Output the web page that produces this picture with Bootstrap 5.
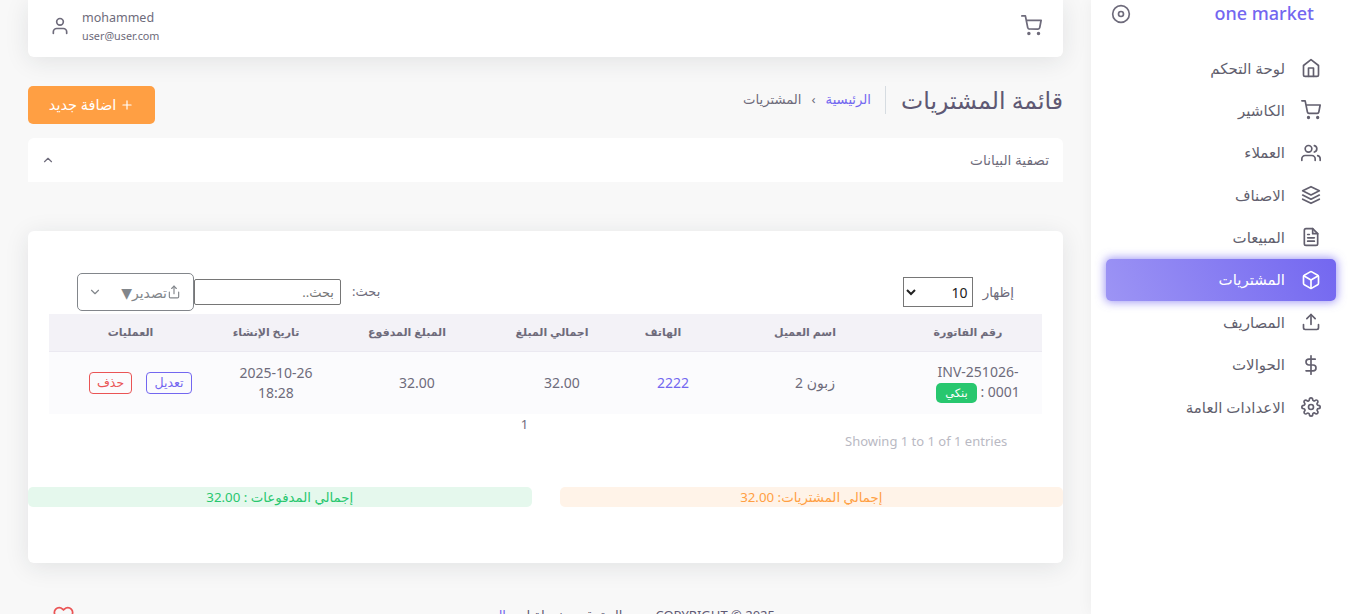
<!DOCTYPE html>
<html lang="ar" dir="rtl">
<head>
  <meta charset="UTF-8" />
  <meta name="viewport" content="width=device-width, initial-scale=1" />
  <title>قائمة المشتريات</title>
  <link href="https://cdn.jsdelivr.net/npm/bootstrap@5.3.0/dist/css/bootstrap.min.css" rel="stylesheet" />
  <style>
    html, body { height: 614px; overflow: hidden; }
    body {
      background: #f8f8f8;
      color: #6e6b7b;
      font-family: "Noto Sans", "DejaVu Sans", sans-serif;
      font-size: 13px;
    }
    .ico { fill: none; stroke: currentColor; stroke-width: 2; stroke-linecap: round; stroke-linejoin: round; flex-shrink: 0; }
    .page-wrap { width: 1348px; height: 614px; }

    /* sidebar */
    .side { width: 257px; height: 614px; background: #fff; box-shadow: 0 0 15px rgba(34,41,47,.05); flex-shrink: 0; }
    .side-brand { height: 27px; padding: 0 34px 0 20px; }
    .brand-name { color: #7367f0; font-size: 18px; font-weight: 500; line-height: 27px; }
    .side-menu { margin-top: 19.6px; padding: 0 12px 0 15px; }
    .side-link { height: 42.4px; padding: 0 15px; gap: 16px; color: #625f6e; font-size: 15px; text-decoration: none; border-radius: 5px; }
    .side-link.on {
      color: #fff;
      background: linear-gradient(-118deg, #7367f0, rgba(115,103,240,.7));
      box-shadow: 0 0 10px 1px rgba(115,103,240,.7);
    }

    /* content */
    .content { width: 1091px; padding: 0 28px; }
    .top-bar { height: 57px; padding: 0 21px 6px 22px; background: #fff; border-radius: 0 0 6px 6px; box-shadow: 0 4px 24px rgba(34,41,47,.1); }
    .u-name { font-size: 12.5px; line-height: 20px; }
    .u-mail { font-size: 10.8px; line-height: 16px; }
    .title-row { margin-top: 29px; height: 38px; }
    .page-title { font-size: 23.6px; font-weight: 400; color: #5e5873; margin: 0; padding-left: 15px; border-left: 1px solid #d6dce1; line-height: 28px; }
    .crumbs { font-size: 13.2px; padding-right: 14px; gap: 10px; }
    .crumbs a { color: #7367f0; text-decoration: none; }
    .btn-add { width: 127px; height: 38px; background: #ff9f43; color: #fff; border: 0; border-radius: 5px; font-size: 14.5px; }
    .btn-add:hover { background: #ff9f43; color: #fff; }
    .filter-box { margin-top: 14px; height: 44px; padding: 0 14px 0 13px; background: #fff; border-radius: 6px 6px 0 0; font-size: 13.7px; }

    .main-card { margin-top: 49px; height: 332px; border: 0; border-radius: 6px; box-shadow: 0 4px 24px rgba(34,41,47,.1); }
    .tools { margin: 42px 49px 3px; height: 38px; }
    .show-sel { width: 70px; height: 30px; border: 1px solid #767676; background: #fff; color: #222; font-size: 14px; border-radius: 0; }
    .show-label { font-size: 13.5px; padding-left: 2px; }
    .find-label { padding-left: 11px; }
    .find-box { width: 147px; height: 26px; border: 1px solid #767676; border-radius: 2px; padding: 0 6px; font-size: 13px; font-family: inherit; color: #6e6b7b; }
    .find-box::placeholder { color: #757575; }
    .btn-export { width: 117px; height: 38px; border: 1px solid #82868b; border-radius: 5px; color: #82868b; background: #fff; font-size: 14px; padding: 0 12px 0 10px; }
    .tbl-wrap { margin: 0 21px; }
    .buy-table { table-layout: fixed; width: 993px; margin: 0; color: #6e6b7b; }
    .buy-table th { height: 37px; padding: 0 20px 0 0; background: #f3f2f7; border-bottom: 1px solid #ebe9f1; color: #6e6b7b; font-size: 11px; font-weight: 700; text-align: center; vertical-align: middle; }
    .buy-table th.th-last { padding: 0; }
    .buy-table td { height: 63px; padding: 0 4px; background: #fbfbfd; border-bottom: 0; font-size: 14px; line-height: 20px; text-align: center; vertical-align: middle; }
    .buy-table td.acts { padding-left: 24px; }
    .w-a { width: 128px; } .w-b { width: 198px; } .w-c { width: 86px; } .w-d { width: 136px; }
    .w-e { width: 154px; } .w-f { width: 128px; } .w-g { width: 163px; }
    .phone { color: #7367f0; }
    .pay-tag { display: inline-block; background: #28c76f; color: #fff; font-size: 11.5px; line-height: 20px; height: 20px; border-radius: 5px; padding: 0 9px; }
    .act-gap { gap: 14px; }
    .mini-btn { font-size: 12.5px; line-height: 18px; height: 22px; padding: 0; background: transparent; border-radius: 4px; }
    .mini-edit { width: 46px; border: 1px solid #7367f0; color: #7367f0; }
    .mini-del { width: 43px; border: 1px solid #ea5455; color: #ea5455; }
    .pager-num { height: 20px; line-height: 20px; text-align: center; padding-right: 42px; }
    .entries { height: 14px; line-height: 14px; direction: ltr; color: #b9b9c3; font-size: 13px; padding-left: 817px; }
    .totals { margin-top: 39px; gap: 28px; }
    .total-bar { height: 20px; line-height: 20px; border-radius: 5px; text-align: center; font-size: 13.3px; flex: 1 1 0; }
    .total-buy { background: rgba(255,159,67,.12); color: #ff9f43; }
    .total-paid { background: rgba(40,199,111,.12); color: #28c76f; }
    .foot { margin-top: 42px; padding-left: 25px; padding-right: 288px; height: 30px; font-size: 13px; color: #5e5873; }
    .foot-text { padding-top: 1px; }
    .foot a { color: #7367f0; text-decoration: none; }
    .heart { color: #ea5455; }
  </style>
</head>
<body>

<svg width="0" height="0" class="position-absolute">
  <symbol id="i-home" viewBox="0 0 24 24"><path d="M3 9l9-7 9 7v11a2 2 0 0 1-2 2H5a2 2 0 0 1-2-2z"/><polyline points="9 22 9 12 15 12 15 22"/></symbol>
  <symbol id="i-cart" viewBox="0 0 24 24"><circle cx="9" cy="21" r="1"/><circle cx="20" cy="21" r="1"/><path d="M1 1h4l2.68 13.39a2 2 0 0 0 2 1.61h9.72a2 2 0 0 0 2-1.61L23 6H6"/></symbol>
  <symbol id="i-users" viewBox="0 0 24 24"><path d="M17 21v-2a4 4 0 0 0-4-4H5a4 4 0 0 0-4 4v2"/><circle cx="9" cy="7" r="4"/><path d="M23 21v-2a4 4 0 0 0-3-3.87"/><path d="M16 3.13a4 4 0 0 1 0 7.75"/></symbol>
  <symbol id="i-layers" viewBox="0 0 24 24"><polygon points="12 2 2 7 12 12 22 7 12 2"/><polyline points="2 17 12 22 22 17"/><polyline points="2 12 12 17 22 12"/></symbol>
  <symbol id="i-file" viewBox="0 0 24 24"><path d="M14 2H6a2 2 0 0 0-2 2v16a2 2 0 0 0 2 2h12a2 2 0 0 0 2-2V8z"/><polyline points="14 2 14 8 20 8"/><line x1="16" y1="13" x2="8" y2="13"/><line x1="16" y1="17" x2="8" y2="17"/><polyline points="10 9 9 9 8 9"/></symbol>
  <symbol id="i-box" viewBox="0 0 24 24"><path d="M21 16V8a2 2 0 0 0-1-1.73l-7-4a2 2 0 0 0-2 0l-7 4A2 2 0 0 0 3 8v8a2 2 0 0 0 1 1.73l7 4a2 2 0 0 0 2 0l7-4A2 2 0 0 0 21 16z"/><polyline points="3.27 6.96 12 12.01 20.73 6.96"/><line x1="12" y1="22.08" x2="12" y2="12"/></symbol>
  <symbol id="i-upload" viewBox="0 0 24 24"><path d="M21 15v4a2 2 0 0 1-2 2H5a2 2 0 0 1-2-2v-4"/><polyline points="17 8 12 3 7 8"/><line x1="12" y1="3" x2="12" y2="15"/></symbol>
  <symbol id="i-dollar" viewBox="0 0 24 24"><line x1="12" y1="1" x2="12" y2="23"/><path d="M17 5H9.5a3.5 3.5 0 0 0 0 7h5a3.5 3.5 0 0 1 0 7H6"/></symbol>
  <symbol id="i-gear" viewBox="0 0 24 24"><circle cx="12" cy="12" r="3"/><path d="M19.4 15a1.65 1.65 0 0 0 .33 1.82l.06.06a2 2 0 0 1 0 2.83 2 2 0 0 1-2.83 0l-.06-.06a1.65 1.65 0 0 0-1.82-.33 1.65 1.65 0 0 0-1 1.51V21a2 2 0 0 1-2 2 2 2 0 0 1-2-2v-.09A1.65 1.65 0 0 0 9 19.4a1.65 1.65 0 0 0-1.82.33l-.06.06a2 2 0 0 1-2.83 0 2 2 0 0 1 0-2.83l.06-.06a1.65 1.65 0 0 0 .33-1.82 1.65 1.65 0 0 0-1.51-1H3a2 2 0 0 1-2-2 2 2 0 0 1 2-2h.09A1.65 1.65 0 0 0 4.6 9a1.65 1.65 0 0 0-.33-1.82l-.06-.06a2 2 0 0 1 0-2.83 2 2 0 0 1 2.83 0l.06.06a1.65 1.65 0 0 0 1.82.33H9a1.65 1.65 0 0 0 1-1.51V3a2 2 0 0 1 2-2 2 2 0 0 1 2 2v.09a1.65 1.65 0 0 0 1 1.51 1.65 1.65 0 0 0 1.82-.33l.06-.06a2 2 0 0 1 2.83 0 2 2 0 0 1 0 2.83l-.06.06a1.65 1.65 0 0 0-.33 1.82V9a1.65 1.65 0 0 0 1.51 1H21a2 2 0 0 1 2 2 2 2 0 0 1-2 2h-.09a1.65 1.65 0 0 0-1.51 1z"/></symbol>
  <symbol id="i-user" viewBox="0 0 24 24"><path d="M20 21v-2a4 4 0 0 0-4-4H8a4 4 0 0 0-4 4v2"/><circle cx="12" cy="7" r="4"/></symbol>
  <symbol id="i-heart" viewBox="0 0 24 24"><path d="M20.84 4.61a5.5 5.5 0 0 0-7.78 0L12 5.67l-1.06-1.06a5.5 5.5 0 0 0-7.78 7.78l1.06 1.06L12 21.23l7.78-7.78 1.06-1.06a5.5 5.5 0 0 0 0-7.78z"/></symbol>
  <symbol id="i-share" viewBox="0 0 24 24"><path d="M4 12v8a2 2 0 0 0 2 2h12a2 2 0 0 0 2-2v-8"/><polyline points="16 6 12 2 8 6"/><line x1="12" y1="2" x2="12" y2="15"/></symbol>
  <symbol id="i-up" viewBox="0 0 24 24"><polyline points="18 15 12 9 6 15"/></symbol>
  <symbol id="i-down" viewBox="0 0 24 24"><polyline points="6 9 12 15 18 9"/></symbol>
  <symbol id="i-plus" viewBox="0 0 24 24"><line x1="12" y1="5" x2="12" y2="19"/><line x1="5" y1="12" x2="19" y2="12"/></symbol>
  <symbol id="i-disc" viewBox="0 0 24 24"><circle cx="12" cy="12" r="10"/><circle cx="12" cy="12" r="3"/></symbol>
</svg>

<div class="page-wrap d-flex">

  <!-- القائمة الجانبية -->
  <aside class="side">
    <div class="side-brand d-flex justify-content-between align-items-center">
      <span class="brand-name" dir="ltr">one market</span>
      <svg class="ico" width="20" height="20"><use href="#i-disc"/></svg>
    </div>
    <nav class="side-menu nav flex-column">
      <a class="side-link d-flex align-items-center" href="#"><svg class="ico" width="20" height="20"><use href="#i-home"/></svg>لوحة التحكم</a>
      <a class="side-link d-flex align-items-center" href="#"><svg class="ico" width="20" height="20"><use href="#i-cart"/></svg>الكاشير</a>
      <a class="side-link d-flex align-items-center" href="#"><svg class="ico" width="20" height="20"><use href="#i-users"/></svg>العملاء</a>
      <a class="side-link d-flex align-items-center" href="#"><svg class="ico" width="20" height="20"><use href="#i-layers"/></svg>الاصناف</a>
      <a class="side-link d-flex align-items-center" href="#"><svg class="ico" width="20" height="20"><use href="#i-file"/></svg>المبيعات</a>
      <a class="side-link on d-flex align-items-center" href="#"><svg class="ico" width="20" height="20"><use href="#i-box"/></svg>المشتريات</a>
      <a class="side-link d-flex align-items-center" href="#"><svg class="ico" width="20" height="20"><use href="#i-upload"/></svg>المصاريف</a>
      <a class="side-link d-flex align-items-center" href="#"><svg class="ico" width="20" height="20"><use href="#i-dollar"/></svg>الحوالات</a>
      <a class="side-link d-flex align-items-center" href="#"><svg class="ico" width="20" height="20"><use href="#i-gear"/></svg>الاعدادات العامة</a>
    </nav>
  </aside>

  <main class="content">
    <!-- الشريط العلوي -->
    <div class="top-bar d-flex justify-content-between align-items-center">
      <svg class="ico" width="21" height="21"><use href="#i-cart"/></svg>
      <div class="d-flex align-items-center gap-2" dir="ltr">
        <svg class="ico" width="20" height="20"><use href="#i-user"/></svg>
        <div class="ps-1">
          <div class="u-name">mohammed</div>
          <div class="u-mail">user@user.com</div>
        </div>
      </div>
    </div>

    <div class="title-row d-flex justify-content-between align-items-start">
      <div class="d-flex align-items-center">
        <h2 class="page-title">قائمة المشتريات</h2>
        <div class="crumbs d-flex align-items-center">
          <a href="#">الرئيسية</a>
          <span>›</span>
          <span>المشتريات</span>
        </div>
      </div>
      <button class="btn btn-add d-flex align-items-center justify-content-center gap-1" type="button">
        <svg class="ico" width="14" height="14"><use href="#i-plus"/></svg>
        اضافة جديد
      </button>
    </div>

    <div class="filter-box d-flex justify-content-between align-items-center">
      <span>تصفية البيانات</span>
      <svg class="ico" width="14" height="14"><use href="#i-up"/></svg>
    </div>

    <div class="card main-card">
      <div class="tools d-flex justify-content-between align-items-center">
        <div class="d-flex align-items-center gap-2">
          <label for="showSel" class="show-label">إظهار</label>
          <select id="showSel" class="show-sel"><option>10</option><option>25</option></select>
        </div>
        <div class="d-flex align-items-center">
          <label for="findBox" class="find-label">بحث:</label>
          <input id="findBox" class="find-box" type="text" placeholder="بحث.." />
          <button class="btn-export d-flex justify-content-between align-items-center" type="button">
            <span class="d-flex align-items-center"><svg class="ico" width="14" height="14"><use href="#i-share"/></svg>تصدير▼</span>
            <svg class="ico" width="14" height="14"><use href="#i-down"/></svg>
          </button>
        </div>
      </div>

      <div class="tbl-wrap">
        <table class="table buy-table">
          <colgroup>
            <col class="w-a" /><col class="w-b" /><col class="w-c" /><col class="w-d" /><col class="w-e" /><col class="w-f" /><col class="w-g" />
          </colgroup>
          <thead>
            <tr>
              <th>رقم الفاتورة</th>
              <th>اسم العميل</th>
              <th>الهاتف</th>
              <th>اجمالي المبلغ</th>
              <th>المبلغ المدفوع</th>
              <th>تاريخ الإنشاء</th>
              <th class="th-last">العمليات</th>
            </tr>
          </thead>
          <tbody>
            <tr>
              <td><span dir="ltr">INV-251026-</span><br />0001 : <span class="pay-tag">بنكي</span></td>
              <td>زبون 2</td>
              <td class="phone">2222</td>
              <td>32.00</td>
              <td>32.00</td>
              <td>2025-10-26<br />18:28</td>
              <td class="acts">
                <div class="d-flex justify-content-center act-gap">
                  <button class="btn mini-btn mini-edit" type="button">تعديل</button>
                  <button class="btn mini-btn mini-del" type="button">حذف</button>
                </div>
              </td>
            </tr>
          </tbody>
        </table>
      </div>

      <div class="pager-num">1</div>
      <div class="entries">Showing 1 to 1 of 1 entries</div>

      <div class="totals d-flex">
        <div class="total-bar total-buy">إجمالي المشتريات: 32.00</div>
        <div class="total-bar total-paid">إجمالي المدفوعات : 32.00</div>
      </div>
    </div>

    <footer class="foot d-flex justify-content-between">
      <span class="foot-text">COPYRIGHT © 2025 جميع الحقوق محفوظة لدى <a href="#">المتجر</a></span>
      <svg class="ico heart" width="21" height="21"><use href="#i-heart"/></svg>
    </footer>
  </main>
</div>

<script src="https://cdn.jsdelivr.net/npm/bootstrap@5.3.0/dist/js/bootstrap.bundle.min.js"></script>
</body>
</html>
